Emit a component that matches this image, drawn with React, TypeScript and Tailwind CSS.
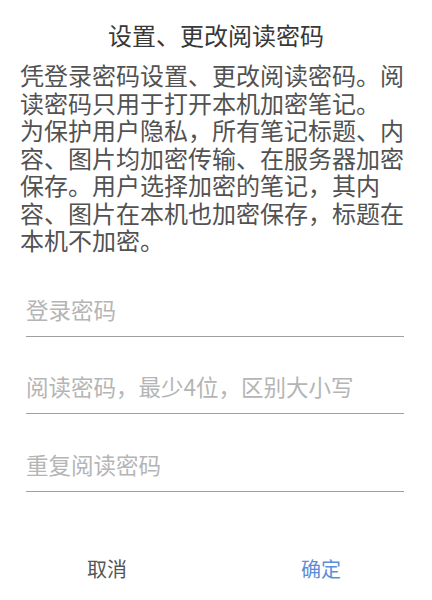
import React from "react";

export default function App() {
  const font = { fontFamily: '"Noto Sans CJK SC", "Noto Sans", sans-serif' };
  return (
    <div className="w-[432px] h-[600px] bg-white overflow-hidden" style={font}>
      <div className="pt-[20px] text-center text-[24px] leading-[30px] text-[#383838]">
        设置、更改阅读密码
      </div>
      <div className="mt-[11px] pl-[20px] pr-[20px] text-[24px] leading-[27.5px] text-[#525252]">
        <p>凭登录密码设置、更改阅读密码。阅读密码只用于打开本机加密笔记。</p>
        <p>为保护用户隐私，所有笔记标题、内容、图片均加密传输、在服务器加密保存。用户选择加密的笔记，其内容、图片在本机也加密保存，标题在本机不加密。</p>
      </div>
      <div className="ml-[26px] mr-[28px] mt-[29px] flex flex-col">
        <input
          type="password"
          placeholder="登录密码"
          className="h-[54px] border-b border-[#a0a0a0] text-[22.5px] outline-none placeholder:text-[#b5b5b5] text-[#333]"
        />
        <input
          type="password"
          placeholder="阅读密码，最少4位，区别大小写"
          className="mt-[23px] h-[54px] border-b border-[#a0a0a0] text-[22.5px] outline-none placeholder:text-[#b5b5b5] text-[#333]"
        />
        <input
          type="password"
          placeholder="重复阅读密码"
          className="mt-[24px] h-[54px] border-b border-[#a0a0a0] text-[22.5px] outline-none placeholder:text-[#b5b5b5] text-[#333]"
        />
      </div>
      <div className="mt-[53px] grid grid-cols-2 pr-[4px]">
        <button className="h-[48px] text-[20px] text-[#555555]">取消</button>
        <button className="h-[48px] text-[20px] text-[#5b8ed8]">确定</button>
      </div>
    </div>
  );
}
